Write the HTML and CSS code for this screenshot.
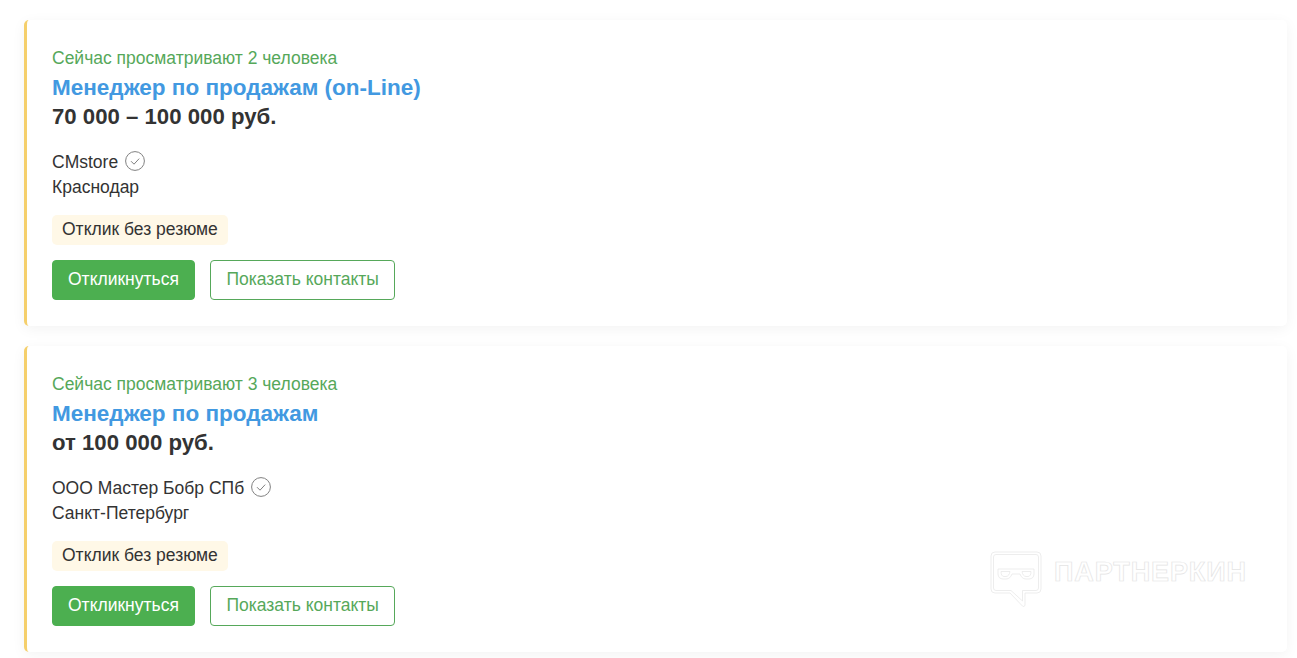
FILE: index.html
```html
<!DOCTYPE html>
<html lang="ru">

<head>
    <meta charset="UTF-8">
    <meta name="viewport" content="width=device-width, initial-scale=1.0">
    <title>Вакансии</title>
    <link rel="stylesheet" href="styles.css">
</head>

<body>
    <div class="vacancy">
        <div class="viewers">Сейчас просматривают 2 человека</div>
        <a class="title" href="#">Менеджер по продажам (on-Line)</a>
        <div class="salary">70 000 – 100 000 руб.</div>
        <div class="company">
            CMstore
            <svg class="check" viewBox="0 0 20 20" width="20" height="20">
                <circle cx="10" cy="10" r="9.4" />
                <path d="M6 10.200l3 3 5.200-5.600" />
            </svg>
        </div>
        <div class="city">Краснодар</div>
        <div class="tag">Отклик без резюме</div>
        <div class="actions">
            <button class="btn btn-primary">Откликнуться</button>
            <button class="btn btn-outline">Показать контакты</button>
        </div>
    </div>

    <div class="vacancy">
        <div class="viewers">Сейчас просматривают 3 человека</div>
        <a class="title" href="#">Менеджер по продажам</a>
        <div class="salary">от 100 000 руб.</div>
        <div class="company">
            ООО Мастер Бобр СПб
            <svg class="check" viewBox="0 0 20 20" width="20" height="20">
                <circle cx="10" cy="10" r="9.4" />
                <path d="M6 10.200l3 3 5.200-5.600" />
            </svg>
        </div>
        <div class="city">Санкт-Петербург</div>
        <div class="tag">Отклик без резюме</div>
        <div class="actions">
            <button class="btn btn-primary">Откликнуться</button>
            <button class="btn btn-outline">Показать контакты</button>
        </div>

        <!-- watermark -->
        <div class="watermark">
            <svg viewBox="0 0 52 56" width="52" height="56">
                <path d="M5 1h42a4 4 0 0 1 4 4v33a4 4 0 0 1-4 4H35v12a1.500 1.500 0 0 1-2.600 1L20 42H5a4 4 0 0 1-4-4V5a4 4 0 0 1 4-4z" />
                <path d="M6 3.500h40a2.500 2.500 0 0 1 2.500 2.500v31a2.500 2.500 0 0 1-2.500 2.500H32.500v10.500L21 39.500H6a2.500 2.500 0 0 1-2.500-2.500V6A2.500 2.500 0 0 1 6 3.500z" />
                <path d="M8 18h36v5c0 3-2 5-5 5h-3c-3 0-5-2-6-5h-8c-1 3-3 5-6 5h-3c-3 0-5-2-5-5z" />
                <path d="M11 20.500h9c-.500 3-2 5-4 5h-2c-2 0-3-2-3-5zM32 20.500h9c0 3-1 5-3 5h-2c-2 0-3.500-2-4-5z" />
            </svg>
            <span class="watermark-text">ПАРТНЕРКИН</span>
        </div>
    </div>
</body>

</html>
```

FILE: styles.css
```css
* {
    margin: 0;
    padding: 0;
    box-sizing: border-box;
}

body {
    font-family: "Liberation Sans", Arial, sans-serif;
    background-color: #fff;
    color: #333;
    padding: 20px 10px 0 24px;
    font-size: 17.5px;
}

.vacancy {
    position: relative;
    height: 306px;
    margin-bottom: 20px;
    padding: 28px 24px 26px 25px;
    background-color: #fff;
    border-left: 3px solid #f5cf6b;
    border-radius: 5px;
    box-shadow: 0 3px 14px rgba(0, 0, 0, 0.05);
}

.viewers {
    color: #56a85a;
    line-height: 20px;
}

.title {
    display: block;
    margin-top: 7px;
    color: #4299e1;
    font-size: 22.5px;
    font-weight: 700;
    line-height: 25px;
    text-decoration: none;
}

.salary {
    margin-top: 4px;
    font-size: 22.200px;
    font-weight: 700;
    line-height: 26px;
}

.company {
    display: flex;
    align-items: center;
    gap: 7px;
    margin-top: 19px;
    line-height: 26px;
}

.city {
    line-height: 25px;
}

.check {
    fill: none;
    stroke: #808080;
    stroke-width: 1;
    margin-top: -2px;
}

.tag {
    display: inline-block;
    margin-top: 15px;
    padding: 0 10px 2px;
    background-color: #fff8e7;
    border-radius: 5px;
    line-height: 28px;
}

.actions {
    display: flex;
    gap: 15px;
    margin-top: 15px;
}

.btn {
    height: 40px;
    border-radius: 4px;
    font-family: inherit;
    font-size: 17.5px;
    cursor: pointer;
}

.btn-primary {
    padding: 0 15px 2px;
    background-color: #4caf50;
    border: 1px solid #4caf50;
    color: #fff;
}

.btn-outline {
    padding: 0 15.5px 2px;
    background-color: #fff;
    border: 1px solid #56a85a;
    color: #56a85a;
}

/* faint logo over the second card */
.watermark {
    position: absolute;
    top: 205px;
    left: 963px;
    display: flex;
    align-items: flex-start;
    gap: 12px;
}

.watermark svg {
    fill: none;
    stroke: #e8e8e8;
    stroke-width: 0.8;
}

.watermark-text {
    margin-top: 6px;
    color: transparent;
    -webkit-text-stroke: 0.7px #e4e4e4;
    font-size: 27px;
    font-weight: 700;
    line-height: 30px;
    letter-spacing: 0.9px;
}
```
